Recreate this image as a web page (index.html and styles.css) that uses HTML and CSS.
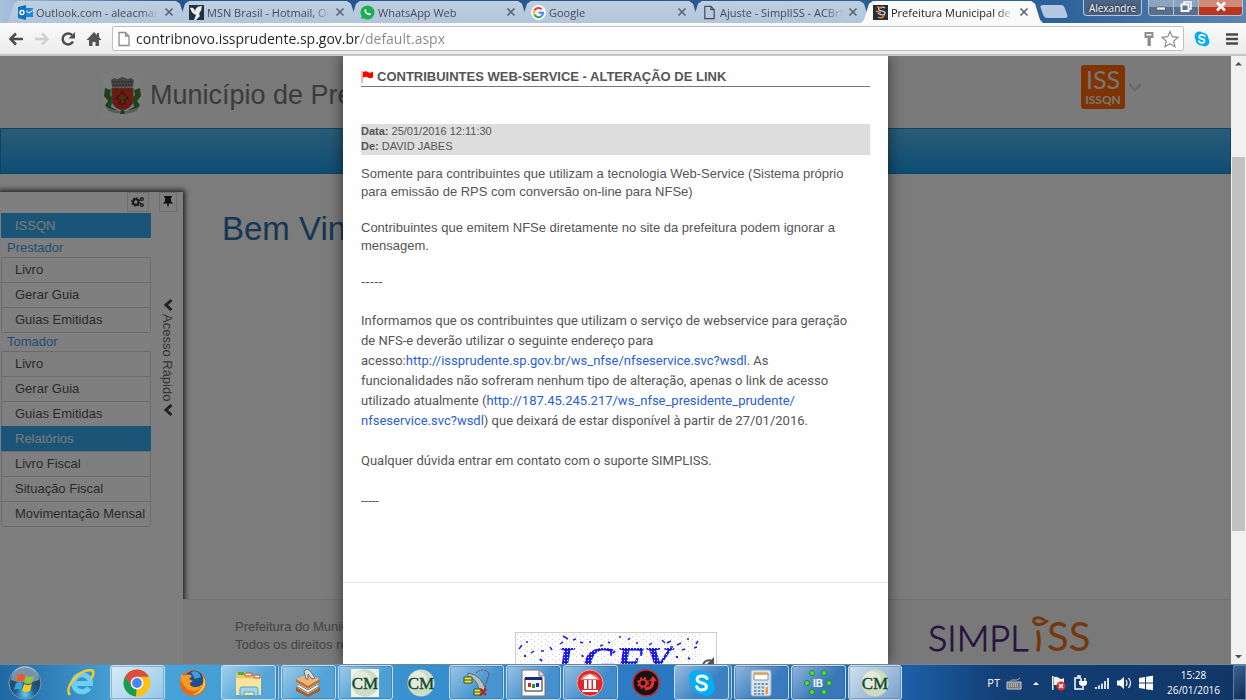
FILE: index.html
```html
<!DOCTYPE html>
<html lang="pt-BR">
<head>
    <meta charset="UTF-8">
    <meta name="viewport" content="width=device-width, initial-scale=1.0">
    <title>Prefeitura Municipal</title>
    <link rel="stylesheet" href="styles.css">
</head>
<body>
    <!-- Shared icons -->
    <svg class="defs" width="0" height="0">
        <symbol id="icon-close" viewBox="0 0 10 10">
            <path d="M1.5 1.5l7 7M8.5 1.5l-7 7" stroke="currentColor" stroke-width="1.6" fill="none"/>
        </symbol>
        <symbol id="icon-page" viewBox="0 0 14 16">
            <path d="M2 1.5h6.5L12 5v9.500H2zM8.500 1.500V5H12" stroke="currentColor" stroke-width="1.3" fill="none"/>
        </symbol>
        <symbol id="icon-skype" viewBox="0 0 28 28">
            <circle cx="9" cy="9" r="8" fill="#00aff0"/>
            <circle cx="19" cy="19" r="8" fill="#00aff0"/>
            <circle cx="14" cy="14" r="11.500" fill="#00aff0"/>
            <path d="M19 9.500c-1-2-3-2.600-5-2.600-3 0-4.900 1.400-4.900 3.500 0 4.600 9.300 2.400 9.300 6.800 0 2.400-2 3.700-4.700 3.700-2.400 0-4.200-1-5-3.200" stroke="#fff" stroke-width="3" fill="none" stroke-linecap="round"/>
        </symbol>
        <symbol id="icon-cm" viewBox="0 0 28 28">
            <circle cx="14" cy="14" r="13.500" fill="#cfdcc4"/>
            <circle cx="11" cy="11" r="9" fill="#e3eadc"/>
            <text x="14" y="20" text-anchor="middle" font-family="Liberation Serif, serif" font-size="17" fill="#12492f" stroke="#12492f" stroke-width=".4">CM</text>
        </symbol>
    </svg>

    <div class="screen">
        <header class="tab-strip">
            <div class="tabs">
                <div class="tab">
                    <svg class="favicon" viewBox="0 0 15 15"><path d="M6 3h9v9H6z" fill="#1f86d2"/><path d="M7 5l4 3 4-3" stroke="#fff" fill="none"/><path d="M0 2l8-2v15l-8-2z" fill="#0f6fc0"/><circle cx="4" cy="7.500" r="2" stroke="#fff" stroke-width="1.400" fill="none"/></svg>
                    <span class="tab-title">Outlook.com - aleacmarq</span>
                    <button class="tab-close" aria-label="Fechar"><svg><use href="#icon-close"/></svg></button>
                </div>
                <div class="tab">
                    <svg class="favicon" viewBox="0 0 15 15"><path d="M0 0h15v15H0z" fill="#223340"/><path d="M1 3c3-1 5 1 5 4 0-3 2-6 7-6-1 2 0 4-2 6-1 1-1 3 0 4l-4 4H5l2-5-2-1C3 8 2 5 1 3z" fill="#e8eef2"/></svg>
                    <span class="tab-title">MSN Brasil - Hotmail, Outlook</span>
                    <button class="tab-close" aria-label="Fechar"><svg><use href="#icon-close"/></svg></button>
                </div>
                <div class="tab">
                    <svg class="favicon" viewBox="0 0 15 15"><circle cx="7.500" cy="7.500" r="7" fill="#1dae52"/><path d="M1 14l1-4 3 3z" fill="#1dae52"/><path d="M5 4c-2 3 2 7 6 6l-1-2-2 .5-2-2 .500-1.500z" fill="#fff"/></svg>
                    <span class="tab-title">WhatsApp Web</span>
                    <button class="tab-close" aria-label="Fechar"><svg><use href="#icon-close"/></svg></button>
                </div>
                <div class="tab">
                    <svg class="favicon" viewBox="0 0 15 15"><circle cx="7.500" cy="7.500" r="7.500" fill="#f6f8fb"/><g fill="none" stroke-width="2"><path d="M10.700 4.200A4.600 4.600 0 0 0 3.400 5.500" stroke="#ea4335"/><path d="M3.400 5.500a4.600 4.600 0 0 0 0 4" stroke="#fbbc05"/><path d="M3.400 9.500a4.600 4.600 0 0 0 7 1.700" stroke="#34a853"/><path d="M10.400 11.200A4.600 4.600 0 0 0 12 7.700H7.700" stroke="#4285f4"/></g></svg>
                    <span class="tab-title">Google</span>
                    <button class="tab-close" aria-label="Fechar"><svg><use href="#icon-close"/></svg></button>
                </div>
                <div class="tab">
                    <svg class="favicon"><use href="#icon-page"/></svg>
                    <span class="tab-title">Ajuste - SimplISS - ACBrNFSe</span>
                    <button class="tab-close" aria-label="Fechar"><svg><use href="#icon-close"/></svg></button>
                </div>
                <div class="tab active">
                    <svg class="favicon" viewBox="0 0 15 15"><path d="M0 0h15v15H0z" fill="#26303a"/><path d="M12 3c-3-2-8 0-6 2s6 0 6 3-6 2-7 0" stroke="#c9ced4" stroke-width="1.300" fill="none"/><path d="M4 2l5 1M3 6l5 2M5 12c3 2 6 0 6-2" stroke="#f08228" stroke-width="1.500" fill="none"/></svg>
                    <span class="tab-title">Prefeitura Municipal de Presidente</span>
                    <button class="tab-close" aria-label="Fechar"><svg><use href="#icon-close"/></svg></button>
                </div>
            </div>
            <button class="new-tab" aria-label="Nova guia"></button>
            <div class="window-controls">
                <button class="profile">Alexandre</button>
                <div class="caption-buttons">
                    <button aria-label="Minimizar"><svg viewBox="0 0 14 12"><path d="M2.500 6.500h9v3h-9z" fill="#fff" stroke="#4b5568" stroke-width=".8"/></svg></button>
                    <button aria-label="Restaurar"><svg viewBox="0 0 14 12"><path d="M5 1.500h7v7H5z" fill="none" stroke="#fff" stroke-width="1.500"/><path d="M2.500 4h7v6.500h-7z" fill="#5f7797" stroke="#fff" stroke-width="1.800"/></svg></button>
                    <button class="close" aria-label="Fechar janela"><svg viewBox="0 0 14 12"><path d="M3 2l8 8M11 2l-8 8" stroke="#fff" stroke-width="2.500"/></svg></button>
                </div>
            </div>
        </header>

        <nav class="toolbar">
            <button aria-label="Voltar"><svg viewBox="0 0 16 16"><path d="M15 8H3M8 2.500L2.500 8 8 13.500" stroke="#4d4d4d" stroke-width="2.600" fill="none"/></svg></button>
            <button aria-label="Avançar"><svg viewBox="0 0 16 16"><path d="M1 8h12M8 2.500L13.500 8 8 13.500" stroke="#cfcfcf" stroke-width="2.400" fill="none"/></svg></button>
            <button aria-label="Recarregar"><svg viewBox="0 0 16 16"><path d="M13 10.500A5.500 5.500 0 1 1 12 4" stroke="#4d4d4d" stroke-width="2.500" fill="none"/><path d="M15 1v6.500H8.500z" fill="#4d4d4d"/></svg></button>
            <button aria-label="Página inicial"><svg viewBox="0 0 16 16"><path d="M8 1l3 3V2h2v4l2.500 3H13v6h-3.500v-4h-3v4H3V9H.500z" fill="#555"/></svg></button>
            <div class="omnibox">
                <svg class="page-icon"><use href="#icon-page"/></svg>
                <input type="text" aria-label="Endereço" value="contribnovo.issprudente.sp.gov.br/default.aspx">
                <svg viewBox="0 0 16 16"><path d="M3.500 1h9v6h-2.700v8H6.500V7h-3z" fill="#8d8d8d"/><path d="M5.500 3h5v1.500h-5z" fill="#fff"/></svg>
                <svg class="star" viewBox="0 0 18 18"><path d="M9 1.500l2.300 5.200 5.700.6-4.300 3.800 1.300 5.600L9 13.800l-5 2.900 1.300-5.600L1 7.300l5.700-.6z" fill="#fff" stroke="#8d8d8d" stroke-width="1.200"/></svg>
            </div>
            <button aria-label="Skype"><svg><use href="#icon-skype"/></svg></button>
            <button class="menu-button" aria-label="Menu"><svg viewBox="0 0 16 16"><path d="M2 3.500h12M2 8h12M2 12.500h12" stroke="#4a4a4a" stroke-width="2.600"/></svg></button>
        </nav>

        <div class="viewport">
            <div class="page">
                <div class="site-header">
                    <svg class="crest" viewBox="0 0 39 44">
                        <path d="M0 0h39v44H0z" fill="#fff" opacity=".35"/>
                        <path d="M8 6l3-2 3 1 5-2 6 2 3-1 3 2-1 7H9z" fill="#8a8a86"/>
                        <path d="M9 8h21M10 11h19" stroke="#444" stroke-dasharray="2 1"/>
                        <path d="M2 14l6 2-1 5 3 3-2 9 6 3-8 1-4-6 3-4-4-5zM37 14l-6 2 1 5-3 3 2 9-6 3 8 1 4-6-3-4 4-5z" fill="#2f8b37"/>
                        <path d="M2 21l5 6M36 20l-5 8" stroke="#e03a2a" stroke-width="2" stroke-dasharray="1 2"/>
                        <path d="M9 14h21v13q-1 7-10.500 9Q10 34 9 27z" fill="#d8331e" stroke="#777"/>
                        <path d="M19.500 17l2 4 4 3-4 2 1 4h-6l1-4-4-2 4-3z" fill="#9c5a26" stroke="#551c10"/>
                        <path d="M4 33q15 8 31 0l-1 4q-14 6-29 0z" fill="#b9b9b9"/>
                        <path d="M18 36h3l1 4h-5z" fill="#2f8b37"/>
                    </svg>
                    <h1>Município de Presidente Prudente</h1>
                    <a class="iss-badge" href="#"><strong>ISS</strong><span>ISSQN</span></a>
                    <svg class="chevron" viewBox="0 0 14 14"><path d="M1 3l6 6 6-6v3l-6 6-6-6z" fill="#ddd" stroke="#c5c5c5" stroke-width=".8"/></svg>
                </div>
                <div class="menu-bar"></div>
                <div class="page-body">
                    <aside class="sidebar">
                        <div class="side-menu">
                            <div class="side-tools">
                                <button aria-label="Configurar"><svg viewBox="0 0 16 14"><circle cx="5.500" cy="7" r="3.200" fill="none" stroke="#333" stroke-width="2.400"/><circle cx="5.500" cy="7" r="4.800" fill="none" stroke="#333" stroke-width="1.500" stroke-dasharray="2 1.770"/><circle cx="12.500" cy="3.500" r="1.700" fill="none" stroke="#333" stroke-width="1.500"/><circle cx="12.500" cy="10.500" r="1.700" fill="none" stroke="#333" stroke-width="1.500"/></svg></button>
                            </div>
                            <h2>ISSQN</h2>
                            <h3>Prestador</h3>
                            <ul>
                                <li><a href="#">Livro</a></li>
                                <li><a href="#">Gerar Guia</a></li>
                                <li><a href="#">Guias Emitidas</a></li>
                            </ul>
                            <h3>Tomador</h3>
                            <ul>
                                <li><a href="#">Livro</a></li>
                                <li><a href="#">Gerar Guia</a></li>
                                <li><a href="#">Guias Emitidas</a></li>
                            </ul>
                            <h2>Relatórios</h2>
                            <ul>
                                <li><a href="#">Livro Fiscal</a></li>
                                <li><a href="#">Situação Fiscal</a></li>
                                <li><a href="#">Movimentação Mensal</a></li>
                            </ul>
                        </div>
                        <div class="side-handle">
                            <button class="pin" aria-label="Fixar"><svg viewBox="0 0 12 12"><path d="M2 0h8v1.500H9V5l2 2.500H7L6 12 5 7.500H1L3 5V1.500H2z" fill="#222"/></svg></button>
                            <button class="quick-access">
                                <svg viewBox="0 0 10 12"><path d="M8.500 1L3 6l5.500 5" stroke="#444" stroke-width="3" fill="none"/></svg>
                                <span>Acesso Rápido</span>
                                <svg viewBox="0 0 10 12"><path d="M8.500 1L3 6l5.500 5" stroke="#444" stroke-width="3" fill="none"/></svg>
                            </button>
                        </div>
                    </aside>
                    <div class="main">
                        <p class="welcome">Bem Vindo</p>
                        <footer class="site-footer">
                            <p>Prefeitura do Município<br>Todos os direitos reservados</p>
                            <svg class="simpliss" viewBox="0 0 168 44">
                                <text x="-1" y="37" font-family="Lato, sans-serif" font-weight="300" font-size="36" fill="#4a2578" stroke="#4a2578" stroke-width=".8">SIMPL</text>
                                <text x="118" y="37" font-family="Lato, sans-serif" font-size="40" fill="#e8711c">SS</text>
                                <path d="M109 18q2 10 0 18" stroke="#e8711c" stroke-width="3.500" fill="none" stroke-linecap="round"/>
                                <path d="M115 6c-5-4-12-2-10 2 2 4 9 3 13-1" stroke="#e8711c" stroke-width="3" fill="none" stroke-linecap="round"/>
                            </svg>
                        </footer>
                    </div>
                </div>

                <div class="overlay">
                    <div class="modal" role="dialog" aria-labelledby="modal-title">
                        <div class="modal-content">
                            <h2 id="modal-title"><svg viewBox="0 0 12 14"><path d="M1 1v12" stroke="#ff6b6b"/><path d="M2 2q2.500-1.500 5 0t5-.5v6q-2.500 1.500-5 0T2 8z" fill="#f00"/></svg>CONTRIBUINTES WEB-SERVICE - ALTERAÇÃO DE LINK</h2>
                            <div class="meta">
                                <div><b>Data:</b> 25/01/2016 12:11:30</div>
                                <div><b>De:</b> DAVID JABES</div>
                            </div>
                            <div class="message">
                                <p>Somente para contribuintes que utilizam a tecnologia Web-Service (Sistema próprio para emissão de RPS com conversão on-line para NFSe)</p>
                                <p>Contribuintes que emitem NFSe diretamente no site da prefeitura podem ignorar a mensagem.</p>
                                <p>-----</p>
                            </div>
                            <div class="message notice">
                                <p>Informamos que os contribuintes que utilizam o serviço de webservice para geração<br>de NFS-e deverão utilizar o seguinte endereço para<br>acesso:<a href="#">http://issprudente.sp.gov.br/ws_nfse/nfseservice.svc?wsdl</a>. As<br>funcionalidades não sofreram nenhum tipo de alteração, apenas o link de acesso<br>utilizado atualmente (<a href="#">http://187.45.245.217/ws_nfse_presidente_prudente/<br>nfseservice.svc?wsdl</a>) que deixará de estar disponível à partir de 27/01/2016.</p>
                                <p>Qualquer dúvida entrar em contato com o suporte SIMPLISS.</p>
                                <p>-----</p>
                            </div>
                        </div>
                        <div class="modal-footer">
                            <svg class="captcha" viewBox="0 0 200 60">
                                <defs>
                                    <pattern id="grain" width="7" height="5" patternUnits="userSpaceOnUse"><path d="M1 1h1v1H1zM4 3h1v1H4z" fill="#ccc"/></pattern>
                                    <pattern id="ink" width="3" height="3" patternUnits="userSpaceOnUse"><path d="M0 0h3v3H0z" fill="#1a1ae6"/><path d="M0 0h1v1H0z" fill="#fff"/></pattern>
                                </defs>
                                <path d="M0 0h184v60H0z" fill="url(#grain)"/>
                                <g stroke="#2222e0" stroke-width="1.500" fill="none">
                                    <path d="M3 16l3-4M10 9h2M15 20l3-2M25 18h3M34 14l2 3M44 11l3-2M47 3l5 3M57 7l3-1M64 9l3 1M73 9h2M84 13l3-1M92 9l2 1M103 4h2M112 7l2-2M120 10h2M133 12l3-2M146 7l3 3M151 10l4-2M154 14h3M161 12l4-2M166 17l3-1M171 6h2M178 15l3-1M180 11l2-3"/>
                                    <path d="M24 26l2 2M8 23h2M66 22l1 2M97 20l2-2M172 25l2 1M160 24h2M136 18l2 2" stroke-width="2"/>
                                </g>
                                <text x="40" y="44" font-family="Liberation Serif, serif" font-size="44" font-weight="bold" font-style="italic" fill="url(#ink)">LGFY</text>
                                <path d="M187 33a6 6 0 0 1 9-5" stroke="#555" stroke-width="2" fill="none"/><path d="M198 24v7h-7z" fill="#555"/>
                            </svg>
                        </div>
                    </div>
                </div>
            </div>

            <div class="scrollbar">
                <svg viewBox="0 0 15 15"><path d="M4 9.500L7.500 6 11 9.500z" fill="#505050"/></svg>
                <div class="track"><div class="thumb"></div></div>
                <svg viewBox="0 0 15 15"><path d="M4 6l3.500 3.500L11 6z" fill="#505050"/></svg>
            </div>
        </div>

        <footer class="taskbar">
            <button class="start" aria-label="Iniciar">
                <svg viewBox="0 0 34 34"><defs><radialGradient id="orb" cy=".85"><stop offset="0" stop-color="#5fd2f5"/><stop offset=".6" stop-color="#1b5f93"/><stop offset="1" stop-color="#244a6b"/></radialGradient></defs><circle cx="17" cy="17" r="16" fill="url(#orb)" stroke="#7b9db8"/><path d="M3 14a14 14 0 0 1 28 0q-14 5-28 0z" fill="#fff" opacity=".4"/><path d="M10 9q4-2 7 0l-2 7q-3-2-7 0z" fill="#ef5a24"/><path d="M18 10q4 2 8 0l-2 7q-4 2-8 0z" fill="#8fc63d"/><path d="M8 17q4-2 7 0l-2 7q-3-2-7 0z" fill="#36a4e0"/><path d="M16 18q4 2 8 0l-2 7q-4 2-8 0z" fill="#fcc81d"/></svg>
            </button>
            <div class="tasks">
                <button class="task" aria-label="Internet Explorer"><svg viewBox="0 0 28 28"><path d="M22 19A8.500 8.500 0 1 1 23.500 14.500H9" stroke="#6bd0f6" stroke-width="5" fill="none"/><path d="M3 26C-3 19 10 2 23 1c5 0 4 5 1 9" stroke="#f6cb26" stroke-width="2.500" fill="none"/></svg></button>
                <button class="task open current" aria-label="Chrome"><svg viewBox="0 0 28 28"><circle cx="14" cy="14" r="13.500" fill="#fbc116"/><path d="M2.300 7.200A13.500 13.500 0 0 1 25.700 7.500H14z" fill="#dd4b3c"/><path d="M2.300 7.200L8 17l6-3V7.500h12l-.3-.3L14 .5z" fill="#dd4b3c"/><path d="M2.300 7.200L8.500 17.500l5 3-.5 7A13.500 13.500 0 0 1 2.300 7.200z" fill="#179c53"/><circle cx="14" cy="14" r="6.300" fill="#fff"/><circle cx="14" cy="14" r="4.900" fill="#4486f4"/></svg></button>
                <button class="task" aria-label="Firefox"><svg viewBox="0 0 28 28"><circle cx="14" cy="14" r="13" fill="#e66a1c"/><circle cx="15" cy="11" r="9.500" fill="#204f91"/><path d="M12 3q7-3 10 5l-6 2z" fill="#4a9ad4"/><path d="M2 5l3 2q4-3 8 0l-3 3 4 2-3 2q0 4 5 4 6 0 8-4-1 8-9 8Q7 22 2 12z" fill="#f59b23"/><path d="M24 7q4 6 1 12-4 7-12 7 14-5 11-19z" fill="#fbd13a"/></svg></button>
                <button class="task open stacked" aria-label="Explorer"><svg viewBox="0 0 28 28"><path d="M1 4l9-1 2 3 14 1v19H1z" fill="#e9c95d"/><path d="M3 3h6v3H3z" fill="#55a845"/><path d="M10 4h7v3h-7zM19 6h6v3h-6z" fill="#e7e4d0" stroke="#c15d38"/><path d="M1 9l25 1v16H1z" fill="#f8e49a"/><path d="M5 27v-7q0-2 2-2h14q2 0 2 2v7h-4v-4H9v4z" fill="#9dd6ee" stroke="#559fc6"/></svg></button>
                <button class="task open" aria-label="Arquivos"><svg viewBox="0 0 28 28"><path d="M2 19l12-5 12 5-12 7z" fill="#c8823e"/><path d="M2 22l12 6 12-6v-4L14 24 2 18z" fill="#a85f25"/><path d="M4 12l10 6 10-6v7l-10 6-10-6z" fill="#f3f3f3"/><path d="M4 15l10 6 10-6M4 18l10 6 10-6" stroke="#777" fill="none"/><path d="M2 10l12-5 12 5-12 7z" fill="#eeb575"/><path d="M2 10l12 7 12-7v3l-12 7-12-7z" fill="#ba7534"/><path d="M10 2q4-4 7 1l4 6-3 1-4-5v5h-2z" fill="#ddd" stroke="#555" stroke-width=".8"/></svg></button>
                <button class="task open" aria-label="CM Sistema"><svg class="boxed"><use href="#icon-cm"/></svg></button>
                <button class="task" aria-label="CM"><svg><use href="#icon-cm"/></svg></button>
                <button class="task open" aria-label="Banco de dados"><svg viewBox="0 0 28 28"><path d="M5 4q14 2 18 18l-7-2Q14 10 5 7z" fill="#b9bfc2" stroke="#60686c"/><path d="M13 4q7-6 13 0-1 6-3 10l-2 8" stroke="#8c2b46" stroke-dasharray="2 1" fill="none"/><path d="M1 8h8v6H1zM11 20h8v6h-8z" fill="#f2ed28" stroke="#315238"/><path d="M1 11h8M11 23h8" stroke="#315238"/><path d="M17 20l6 6m0-6l-6 6" stroke="#b31e1e" stroke-width="2"/></svg></button>
                <button class="task open" aria-label="Aplicativo"><svg viewBox="0 0 28 28"><path d="M3 1h17l6 6v20H3z" fill="#fafafa" stroke="#777"/><path d="M20 1v6h6" fill="#ddd" stroke="#777"/><path d="M6 9h17v13H6z" fill="#fff" stroke="#222"/><path d="M6 8h17v3H6z" fill="#172a86"/><path d="M9 14h3v4H9z" fill="#d22"/><path d="M13 15h3v4h-3z" fill="#1a992e"/><path d="M17 14h3v4h-3z" fill="#2727ce"/></svg></button>
                <button class="task open" aria-label="Banco"><svg viewBox="0 0 28 28"><circle cx="14" cy="14" r="13" fill="#da2929" stroke="#f3a6a3"/><path d="M4 11a11 11 0 0 1 20 0z" fill="#f27067"/><path d="M7 9l7-4 7 4v1H7zM8 11h3v9H8zM12.500 11h3v9h-3zM17 11h3v9h-3zM6 21h16v2H6z" fill="#fff"/></svg></button>
                <button class="task" aria-label="Conversor"><svg viewBox="0 0 28 28"><circle cx="14" cy="14" r="13" fill="#171313" stroke="#d3262c" stroke-width="1.500"/><circle cx="11" cy="14" r="3.500" fill="none" stroke="#e72d32" stroke-width="2"/><circle cx="11" cy="14" r="5" fill="none" stroke="#e72d32" stroke-width="2" stroke-dasharray="2 2"/><path d="M13 20q8 0 8-9" stroke="#e72d32" stroke-width="3" fill="none"/><path d="M17 12l4-5 4 5z" fill="#e72d32"/></svg></button>
                <button class="task open stacked" aria-label="Skype"><svg><use href="#icon-skype"/></svg></button>
                <button class="task open" aria-label="Calculadora"><svg viewBox="0 0 28 28"><rect x="4" y="1" width="20" height="26" rx="2" fill="#d8e6ef" stroke="#8eabc0"/><path d="M7 4h14v7H7z" fill="#fff" stroke="#7392a9"/><path d="M7 4h14v2H7z" fill="#f0a544"/><path d="M7 15h14M7 18.500h10M7 22h10M7 25h10" stroke="#7494ad" stroke-width="2" stroke-dasharray="2.500 1.300"/><path d="M18.500 18h2.500v7h-2.500z" fill="#f39a32"/></svg></button>
                <button class="task open" aria-label="IB"><svg viewBox="0 0 28 28"><g fill="#55dd45" stroke="#218b22"><circle cx="8" cy="4" r="2.500"/><circle cx="20" cy="4" r="2.500"/><circle cx="3" cy="14" r="2.500"/><circle cx="25" cy="14" r="2.500"/><circle cx="8" cy="23" r="2.500"/><circle cx="20" cy="23" r="2.500"/></g><text x="14" y="18" text-anchor="middle" font-family="Liberation Sans, sans-serif" font-weight="bold" font-size="10" fill="#fff">IB</text></svg></button>
                <button class="task open current" aria-label="CM Gestão"><svg><use href="#icon-cm"/></svg></button>
            </div>
            <div class="tray">
                <span class="language">PT</span>
                <svg viewBox="0 0 16 16"><path d="M1 7h14v7H1z" fill="#777" stroke="#ccc"/><path d="M3 9h10M3 11h10" stroke="#eee" stroke-dasharray="1 1"/><path d="M4 7q1-3 4-2t6-2" stroke="#aaa" fill="none"/></svg>
                <svg viewBox="0 0 16 16"><path d="M5 10l3-3 3 3z" fill="#fff"/></svg>
                <svg viewBox="0 0 16 16"><path d="M2 1h1.500v14H2z" fill="#fff"/><path d="M4 2q3-1 5 1t5 0v7H4z" fill="#eee"/><circle cx="11" cy="11" r="4.500" fill="#dc2d2d"/><path d="M9 9l4 4M13 9l-4 4" stroke="#fff" stroke-width="1.500"/></svg>
                <svg viewBox="0 0 16 16"><path d="M8 3H3v11h7M5 1h3v2" stroke="#fff" stroke-width="1.500" fill="none"/><path d="M7 6h8v2q0 3-4 3T7 8z" fill="#fff"/><path d="M9 3v3M13 3v3M11 11v4" stroke="#fff" stroke-width="1.500"/></svg>
                <svg viewBox="0 0 16 16"><path d="M1 12h2v2H1zM4 10.500h2V14H4zM7 8.500h2V14H7zM10 6h2v8h-2zM13 3h2v11h-2z" fill="#d6dfe8"/></svg>
                <svg viewBox="0 0 16 16"><path d="M1 5.500h3L8 2v12l-4-3.500H1z" fill="#fff"/><path d="M10 5q2 3 0 6M12.500 3q4 5 0 10" stroke="#fff" stroke-width="1.200" fill="none"/></svg>
                <svg viewBox="0 0 16 16"><path d="M1 3l6-1v5.500H1zM8 1.800l7-1v6.700H8zM1 8.500h6V14l-6-1zM8 8.500h7v6.700l-7-1z" fill="#fff"/></svg>
            </div>
            <div class="clock"><time>15:28</time><time>26/01/2016</time></div>
            <button class="show-desktop" aria-label="Mostrar área de trabalho"></button>
        </footer>
    </div>
</body>
</html>
```

FILE: styles.css
```css
* {
    box-sizing: border-box;
}

body {
    margin: 0;
    font-family: "Liberation Sans", Arial, sans-serif;
    font-size: 13px;
    color: #555;
}

h1, h2, h3, p, ul {
    margin: 0;
    padding: 0;
    font-weight: normal;
}

button {
    padding: 0;
    border: none;
    background: none;
    font: inherit;
    color: inherit;
}

a {
    text-decoration: none;
    color: inherit;
}

svg {
    display: block;
    flex-shrink: 0;
}

.defs {
    position: absolute;
}

.screen {
    display: flex;
    flex-direction: column;
    height: 100vh;
    overflow: hidden;
}

/* Browser tabs */
.tab-strip {
    display: flex;
    height: 23px;
    padding-left: 12px;
    background: linear-gradient(to right, #a9c3dc, #24558e 14%, #28588f 50%, #2c629c 85%, #5c86b2);
    font-family: "Open Sans", "Noto Sans", sans-serif;
    font-size: 11px;
    color: #444c58;
}

.tabs {
    display: flex;
    flex: 0 1 1026px;
    min-width: 0;
}

.tab {
    position: relative;
    z-index: 0;
    display: flex;
    flex: 1 1 0;
    align-items: center;
    gap: 3px;
    min-width: 0;
    padding: 1px 9px 0 6px;
}

.tab::before {
    content: "";
    position: absolute;
    z-index: -1;
    inset: 1px -5px 0 -6px;
    background: linear-gradient(#becfe1, #b2c5dc);
    clip-path: polygon(0 100%, 3px 85%, 8px 12%, 12px 0, calc(100% - 12px) 0, calc(100% - 8px) 12%, calc(100% - 3px) 85%, 100% 100%);
}

.tab.active {
    z-index: 1;
    color: #222;
}

.tab.active::before {
    background: #fafafa;
}

.favicon {
    width: 15px;
    height: 15px;
}

.tab-title {
    flex: 1;
    min-width: 0;
    overflow: hidden;
    white-space: nowrap;
    mask-image: linear-gradient(to right, #000 calc(100% - 20px), transparent calc(100% - 2px));
}

.tab-close svg {
    width: 10px;
    height: 10px;
    color: #596371;
}

.new-tab {
    width: 24px;
    height: 13px;
    margin: 5px 0 0 4px;
    border-radius: 3px;
    background: #b4c8df;
    transform: skewX(20deg);
}

.window-controls {
    display: flex;
    gap: 6px;
    margin-left: auto;
    padding-right: 3px;
    color: #fff;
}

.profile {
    width: 59px;
    height: 16px;
    border: 1px solid #b6c4d6;
    border-top: none;
    border-radius: 0 0 4px 4px;
    background: #4b6485;
    font-size: 10px;
    line-height: 14px;
    text-shadow: 0 0 3px #000;
}

.caption-buttons {
    display: flex;
    height: 16px;
    overflow: hidden;
    border: 1px solid #b6c4d6;
    border-top: none;
    border-radius: 0 0 4px 4px;
}

.caption-buttons button {
    display: flex;
    justify-content: center;
    width: 25px;
    border-right: 1px solid #b6c4d6;
    background: linear-gradient(#8da3bf 50%, #58708f 50%);
}

.caption-buttons .close {
    width: 43px;
    border: none;
    background: linear-gradient(#d08a7c 50%, #bb3520 50%);
}

.caption-buttons svg {
    width: 14px;
    height: 13px;
}

/* Address bar */
.toolbar {
    display: flex;
    align-items: center;
    gap: 10px;
    height: 33px;
    padding: 0 6px 0 8px;
    border-bottom: 2px solid #c6c6c6;
    background: linear-gradient(#fafafa, #ececec);
}

.toolbar svg {
    width: 16px;
    height: 16px;
}

.toolbar .menu-button {
    margin-left: 4px;
}

.omnibox {
    display: flex;
    flex: 1;
    align-items: center;
    gap: 4px;
    height: 25px;
    padding: 0 4px 0 3px;
    border: 1px solid #bfbfbf;
    border-radius: 2px;
    background: #fff;
}

.omnibox .page-icon {
    color: #8d8d8d;
}

.omnibox .star {
    width: 18px;
    height: 18px;
}

/* Host name dark, path grey */
.omnibox input {
    flex: 1;
    min-width: 0;
    padding: 0;
    border: none;
    outline: none;
    background: linear-gradient(to right, #222 224px, #888 224px);
    background-clip: text;
    color: transparent;
    font: 14px "Open Sans", "Noto Sans", sans-serif;
}

/* Web page */
.viewport {
    display: flex;
    flex: 1;
    min-height: 0;
}

.page {
    position: relative;
    display: flex;
    flex: 1;
    flex-direction: column;
    min-width: 0;
    overflow: hidden;
    background: #f8f8f8;
}

.site-header {
    display: flex;
    align-items: center;
    height: 72px;
    padding: 0 90px 0 103px;
    background: #f4f4f4;
}

.crest {
    width: 39px;
    height: 44px;
    margin-top: 8px;
}

.site-header h1 {
    margin: 6px auto 0 8px;
    font-size: 27px;
    color: #777;
}

.iss-badge {
    display: flex;
    flex-direction: column;
    align-items: center;
    width: 44px;
    height: 44px;
    margin-bottom: 10px;
    border-radius: 3px;
    background: #ff6600;
    color: #eee;
    font: 12px "Lato", sans-serif;
}

.iss-badge strong {
    font-size: 25px;
    font-weight: normal;
    line-height: 28px;
}

.iss-badge span {
    font-weight: bold;
    line-height: 14px;
}

.chevron {
    width: 12px;
    height: 12px;
    margin: 0 0 10px 4px;
}

.menu-bar {
    height: 46px;
    border: 1px solid #1e88c8;
    background: linear-gradient(#56b8ee, #1b9bea);
}

.page-body {
    display: flex;
    flex: 1;
    min-height: 0;
    padding-top: 18px;
}

.sidebar {
    display: flex;
    justify-content: space-between;
    width: 183px;
    padding: 0 6px 0 1px;
    background: #fff;
    box-shadow: 0 0 5px 2px #444;
}

.side-menu {
    width: 150px;
    color: #555;
}

.side-tools {
    display: flex;
    justify-content: flex-end;
    height: 21px;
    padding-right: 2px;
}

.side-tools button, .pin {
    display: flex;
    align-items: center;
    justify-content: center;
    width: 22px;
    height: 20px;
    border: 1px solid #ddd;
}

.side-tools svg {
    width: 14px;
    height: 12px;
}

.side-menu h2 {
    padding-left: 14px;
    background: #34aaf0;
    color: #f4f4f4;
    font-size: 13px;
    line-height: 25px;
}

.side-menu h3 {
    padding-left: 6px;
    color: #3c9be6;
    font-size: 13px;
    line-height: 19px;
}

.side-menu ul {
    border: 1px solid #d8d8d8;
    border-width: 0 1px;
    list-style: none;
}

.side-menu li {
    border-top: 1px solid #d8d8d8;
    line-height: 24px;
}

.side-menu li:last-child {
    box-shadow: 0 1px #d8d8d8;
}

.side-menu a {
    display: block;
    padding-left: 13px;
    white-space: nowrap;
}

.side-handle {
    display: flex;
    flex-direction: column;
    align-items: center;
    width: 19px;
    color: #666;
}

.pin {
    width: 18px;
}

.pin svg {
    width: 12px;
    height: 12px;
}

.quick-access {
    display: flex;
    flex-direction: column;
    align-items: center;
    gap: 3px;
    margin-top: 87px;
}

.quick-access span {
    writing-mode: vertical-rl;
}

.quick-access svg {
    width: 10px;
    height: 12px;
}

.main {
    display: flex;
    flex: 1;
    flex-direction: column;
    justify-content: space-between;
}

.welcome {
    padding: 18px 0 0 39px;
    color: #2c6ea6;
    font-size: 33px;
}

.site-footer {
    display: flex;
    align-items: center;
    justify-content: space-between;
    height: 65px;
    padding: 8px 134px 0 52px;
    border-top: 1px solid #e2e2e2;
    background: #f2f2f2;
    color: #888;
    line-height: 18px;
}

.simpliss {
    width: 168px;
    height: 44px;
}

/* Message window */
.overlay {
    position: absolute;
    z-index: 2;
    inset: 0;
    display: flex;
    justify-content: center;
    background: rgba(0, 0, 0, 0.5);
}

.modal {
    display: flex;
    flex-direction: column;
    width: 545px;
    background: #fefefe;
    box-shadow: 0 0 14px rgba(0, 0, 0, 0.6);
}

.modal-content {
    flex: 1;
    padding: 13px 18px 0;
}

.modal h2 {
    display: flex;
    align-items: center;
    gap: 4px;
    padding-bottom: 1px;
    border-bottom: 1px solid #777;
    font-size: 13px;
    font-weight: bold;
    line-height: 16px;
}

.modal h2 svg {
    width: 12px;
    height: 14px;
}

.meta {
    margin: 37px 0 10px;
    padding-bottom: 1px;
    background: #ddd;
    font-size: 11px;
    line-height: 15px;
}

.message {
    line-height: 18px;
}

.message p {
    margin-bottom: 18px;
}

.notice {
    padding-top: 2px;
    font-family: Roboto, "Noto Sans", sans-serif;
    line-height: 20px;
}

.notice p {
    margin-bottom: 20px;
}

.notice a {
    color: #2a5fd0;
}

.modal-footer {
    display: flex;
    justify-content: center;
    height: 82px;
    padding-top: 49px;
    overflow: hidden;
    border-top: 1px solid #e5e5e5;
}

.captcha {
    width: 202px;
    height: 62px;
    border: 1px solid #ccc;
}

.scrollbar {
    display: flex;
    flex-direction: column;
    width: 15px;
    background: #f1f1f1;
}

.scrollbar svg {
    width: 15px;
    height: 15px;
}

.track {
    flex: 1;
    padding: 86px 1px 0;
}

.thumb {
    height: 76%;
    background: #c1c1c1;
}

/* Taskbar */
.taskbar {
    display: flex;
    align-items: center;
    height: 36px;
    border-top: 1px solid #6f8698;
    background: linear-gradient(to right, #1f68a4, #4aa5da 10%, #3a95d2 30%, #2b7cc4 50%, #1e62ac 72%, #133f76 80%, #103766);
    color: #fff;
    font: 11px "Open Sans", "Noto Sans", sans-serif;
}

.start {
    width: 55px;
    padding-left: 8px;
}

.start svg {
    width: 34px;
    height: 34px;
}

.tasks {
    display: flex;
    gap: 2px;
    width: 68%;
    height: 35px;
}

.task {
    display: flex;
    flex: 1 1 0;
    align-items: center;
    justify-content: center;
    min-width: 0;
}

.task svg {
    width: 28px;
    height: 28px;
}

.task.open {
    border: 1px solid #c4dcec;
    border-radius: 3px;
    background: linear-gradient(135deg, rgba(255, 255, 255, 0.5), rgba(255, 255, 255, 0.1) 60%);
    box-shadow: inset 0 0 0 1px rgba(30, 80, 130, 0.3);
}

.task.current {
    background: linear-gradient(135deg, rgba(255, 255, 255, 0.8), rgba(255, 255, 255, 0.4));
}

.task.stacked {
    margin-right: 3px;
    box-shadow: 2px 0 #3c80b4, 3px 0 #a9cde5;
}

.task .boxed {
    background: #eef2e8;
}

.tray {
    display: flex;
    align-items: center;
    gap: 6px;
    margin-left: auto;
}

.tray svg {
    width: 16px;
    height: 16px;
}

.clock {
    display: flex;
    flex-direction: column;
    align-items: center;
    width: 79px;
    font-size: 10px;
    line-height: 15px;
}

.show-desktop {
    width: 13px;
    height: 35px;
    border: 1px solid #5c7fa8;
    background: linear-gradient(135deg, #3a6496, #0f2b52);
}
```
